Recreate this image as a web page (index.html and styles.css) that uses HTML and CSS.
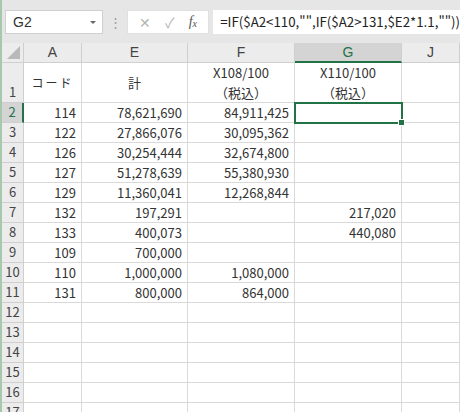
FILE: index.html
```html
<!DOCTYPE html>
<html lang="ja">
<head>
    <meta charset="UTF-8">
    <title>Book1 - Excel</title>
    <link rel="stylesheet" href="styles.css">
</head>
<body>
    <div class="window">
        <!-- name box + formula bar -->
        <div class="toolbar">
            <div class="namebox">
                <span>G2</span>
                <span class="caret"></span>
            </div>
            <div class="grip">⋮</div>
            <div class="fbtns">
                <span class="fbtn">✕</span>
                <span class="fbtn">✓</span>
                <span class="fbtn fx">f<sub>x</sub></span>
            </div>
            <div class="formula">=IF($A2&lt;110,"",IF($A2&gt;131,$E2*1.1,""))</div>
        </div>

        <div class="sheet">
            <!-- column headers -->
            <div class="hd corner"><span class="tri"></span></div>
            <div class="hd col">A</div>
            <div class="hd col">E</div>
            <div class="hd col">F</div>
            <div class="hd col sel">G</div>
            <div class="hd col">J</div>

            <!-- row 1 -->
            <div class="hd rn tall">1</div>
            <div class="c mid kana">コード</div>
            <div class="c mid">計</div>
            <div class="c two"><span>X108/100</span><span>（税込）</span></div>
            <div class="c two"><span>X110/100</span><span>（税込）</span></div>
            <div class="c"></div>

            <div class="hd rn sel">2</div>
            <div class="c num">114</div>
            <div class="c num">78,621,690</div>
            <div class="c num">84,911,425</div>
            <div class="c active"></div>
            <div class="c"></div>

            <div class="hd rn">3</div>
            <div class="c num">122</div>
            <div class="c num">27,866,076</div>
            <div class="c num">30,095,362</div>
            <div class="c"></div>
            <div class="c"></div>

            <div class="hd rn">4</div>
            <div class="c num">126</div>
            <div class="c num">30,254,444</div>
            <div class="c num">32,674,800</div>
            <div class="c"></div>
            <div class="c"></div>

            <div class="hd rn">5</div>
            <div class="c num">127</div>
            <div class="c num">51,278,639</div>
            <div class="c num">55,380,930</div>
            <div class="c"></div>
            <div class="c"></div>

            <div class="hd rn">6</div>
            <div class="c num">129</div>
            <div class="c num">11,360,041</div>
            <div class="c num">12,268,844</div>
            <div class="c"></div>
            <div class="c"></div>

            <div class="hd rn">7</div>
            <div class="c num">132</div>
            <div class="c num">197,291</div>
            <div class="c"></div>
            <div class="c num">217,020</div>
            <div class="c"></div>

            <div class="hd rn">8</div>
            <div class="c num">133</div>
            <div class="c num">400,073</div>
            <div class="c"></div>
            <div class="c num">440,080</div>
            <div class="c"></div>

            <div class="hd rn">9</div>
            <div class="c num">109</div>
            <div class="c num">700,000</div>
            <div class="c"></div>
            <div class="c"></div>
            <div class="c"></div>

            <div class="hd rn">10</div>
            <div class="c num">110</div>
            <div class="c num">1,000,000</div>
            <div class="c num">1,080,000</div>
            <div class="c"></div>
            <div class="c"></div>

            <div class="hd rn">11</div>
            <div class="c num">131</div>
            <div class="c num">800,000</div>
            <div class="c num">864,000</div>
            <div class="c"></div>
            <div class="c"></div>

            <div class="hd rn">12</div>
            <div class="c"></div><div class="c"></div><div class="c"></div><div class="c"></div><div class="c"></div>
            <div class="hd rn">13</div>
            <div class="c"></div><div class="c"></div><div class="c"></div><div class="c"></div><div class="c"></div>
            <div class="hd rn">14</div>
            <div class="c"></div><div class="c"></div><div class="c"></div><div class="c"></div><div class="c"></div>
            <div class="hd rn">15</div>
            <div class="c"></div><div class="c"></div><div class="c"></div><div class="c"></div><div class="c"></div>
            <div class="hd rn">16</div>
            <div class="c"></div><div class="c"></div><div class="c"></div><div class="c"></div><div class="c"></div>
            <div class="hd rn">17</div>
            <div class="c"></div><div class="c"></div><div class="c"></div><div class="c"></div><div class="c"></div>
        </div>
    </div>
</body>
</html>
```

FILE: styles.css
```css
html, body {
    margin: 0;
    padding: 0;
    background: #ffffff;
}

.window {
    width: 460px;
    height: 412px;
    overflow: hidden;
    box-sizing: border-box;
    border-left: 2px solid #a6c9ae;
    font-family: "Noto Sans CJK JP", "Noto Sans", sans-serif;
    color: #333;
}

/* ---- formula bar ---- */
.toolbar {
    display: flex;
    align-items: flex-start;
    height: 43px;
    box-sizing: border-box;
    padding: 10px 0 0 3px;
    background: #e6e6e6;
}

.namebox {
    display: flex;
    align-items: center;
    justify-content: space-between;
    width: 104px;
    height: 24px;
    box-sizing: border-box;
    padding: 0 6px 0 7px;
    background: #fff;
    border: 1px solid #d0d0d0;
    font-family: "Liberation Sans", sans-serif;
    font-size: 14px;
    color: #333;
}

.caret {
    width: 0;
    height: 0;
    border-left: 3px solid transparent;
    border-right: 3px solid transparent;
    border-top: 3px solid #666;
}

.grip {
    width: 25px;
    height: 24px;
    line-height: 24px;
    text-align: center;
    font-size: 13px;
    color: #a0a0a0;
}

.fbtns {
    display: flex;
    align-items: center;
    justify-content: space-around;
    width: 87px;
    height: 24px;
    box-sizing: border-box;
    padding: 0 4px;
    background: #fff;
    border: 1px solid #e0e0e0;
}

.fbtn {
    font-size: 14px;
    color: #b4b4b4;
}

.fx {
    font-family: "Liberation Serif", serif;
    font-style: italic;
    color: #555;
    font-size: 14px;
}

.fx sub {
    font-size: 10px;
    vertical-align: -1px;
}

.formula {
    flex: 1;
    height: 24px;
    line-height: 24px;
    margin-left: 4px;
    padding-left: 7px;
    background: #fff;
    font-size: 13.3px;
    color: #222;
    white-space: nowrap;
}

/* ---- grid ---- */
.sheet {
    display: grid;
    grid-template-columns: 22px 58px 106px 107px 107px 58px;
    grid-template-rows: 20px 40px repeat(16, 20px);
    font-size: 13px;
}

.hd {
    box-sizing: border-box;
    background: #ececec;
    color: #444;
    border-right: 1px solid #cfcfcf;
    border-bottom: 1px solid #cfcfcf;
}

.corner {
    position: relative;
}

.tri {
    position: absolute;
    right: 3px;
    bottom: 3px;
    width: 0;
    height: 0;
    border-left: 13px solid transparent;
    border-bottom: 13px solid #b9b9b9;
}

.col {
    text-align: center;
    line-height: 19px;
    font-family: "Liberation Sans", sans-serif;
    font-size: 14px;
}

.col.sel {
    background: #d4d4d4;
    border-bottom: 2px solid #217346;
    color: #217346;
}

.rn {
    display: flex;
    align-items: flex-end;
    justify-content: center;
    padding-bottom: 1px;
    font-size: 13px;
}

.rn.sel {
    background: #d4d4d4;
    border-right: 2px solid #217346;
    color: #217346;
}

.c {
    box-sizing: border-box;
    border-right: 1px solid #d9d9d9;
    border-bottom: 1px solid #d9d9d9;
    line-height: 19px;
    white-space: nowrap;
}

.num {
    text-align: right;
    padding-right: 5px;
}

.mid {
    display: flex;
    align-items: center;
    justify-content: center;
}

.kana {
    letter-spacing: 2px;
    font-size: 12px;
}

.two {
    display: flex;
    flex-direction: column;
    align-items: center;
    justify-content: center;
    line-height: 20px;
}

.active {
    position: relative;
    z-index: 1;
    outline: 2px solid #217346;
    outline-offset: -1px;
}

.active::after {
    content: "";
    position: absolute;
    right: -4px;
    bottom: -4px;
    width: 5px;
    height: 5px;
    background: #217346;
    border: 1px solid #fff;
}
```
